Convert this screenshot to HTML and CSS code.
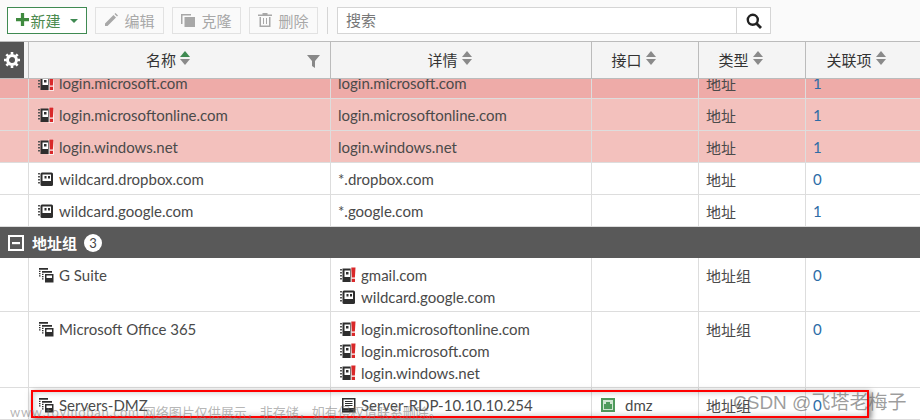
FILE: index.html
```html
<!DOCTYPE html>
<html lang="en">
<head>
    <meta charset="UTF-8">
    <title>地址</title>
    <link rel="stylesheet" href="styles.css">
</head>
<body>
    <svg class="defs" width="0" height="0">
        <symbol id="addr" viewBox="0 0 16 16">
            <rect x="2.500" y="1.500" width="12.500" height="13.500" rx="1.500" fill="#2e2e2e"/>
            <path d="M4.500 3.500h8.500v6.500H4.500z" fill="#fff"/>
            <path d="M6.500 5h2v2.500h-2zM10 5h2v2.500h-2z" fill="#2e2e2e"/>
            <path d="M0 2h2v1.500H0zM0 5h2v1.500H0zM0 8h2v1.500H0zM0 11h2v1.500H0z" fill="#555"/>
        </symbol>
        <symbol id="addr-warn" viewBox="0 0 16 16">
            <path d="M2.500 1.500h9v13.500h-9z" fill="#2e2e2e"/>
            <path d="M4.500 3.500h5.500v6.500H4.500z" fill="#fff"/>
            <path d="M6 5h2.500v2.500H6z" fill="#2e2e2e"/>
            <path d="M0 2h2v1.500H0zM0 5h2v1.500H0zM0 8h2v1.500H0zM0 11h2v1.500H0z" fill="#555"/>
            <path d="M10.500 0H16v16h-5.500z" fill="#fff" fill-opacity=".7"/>
            <path d="M11.300 .5h4.200l-.6 10h-3zM11.800 11.800h3.200v3.200h-3.200z" fill="#d9282a"/>
        </symbol>
        <symbol id="group" viewBox="0 0 16 16">
            <path d="M1 1h9v1.800H1zM1 3.800h1.500v1.200H1zM1 6h1.500v1.200H1zM1 8.200h1.500v1.200H1z" fill="#2e2e2e"/>
            <path d="M4 4h10v1.800H4zM4 6.800h1.500v1.200H4zM4 9h1.500v1.200H4zM4 11.200h1.500v1.200H4z" fill="#2e2e2e"/>
            <path d="M7 7h8.500v8.500H7z" fill="#2e2e2e"/>
            <path d="M8.500 8.500h5.500v2.500H8.500z" fill="#fff"/>
        </symbol>
        <symbol id="server" viewBox="0 0 16 16">
            <path d="M2 1h13.500v14.500H2z" fill="#2e2e2e"/>
            <path d="M3.500 2.500h10.500v8.500H3.500z" fill="#fff"/>
            <path d="M5 4h7.500v1H5zM5 6h7.500v1H5zM5 8h7.500v1H5z" fill="#2e2e2e"/>
        </symbol>
        <symbol id="sort" viewBox="0 0 10 14">
            <path d="M5 0l5 6H0z"/>
            <path d="M0 8h10l-5 6z" fill="#8a8a8a"/>
        </symbol>
    </svg>

    <div class="toolbar">
        <button class="btn btn-new">
            <svg class="plus" viewBox="0 0 12 12"><path d="M4.500 0h3v4.500H12v3H7.500V12h-3V7.500H0v-3h4.500z"/></svg>
            <span>新建</span>
            <span class="caret"></span>
        </button>
        <button class="btn">
            <svg class="ico" viewBox="0 0 14 14"><path d="M1 10.500L9.500 2l2.500 2.500L3.500 13H1zM10.500 1l1-1L14 2.500l-1 1z"/></svg>
            <span>编辑</span>
        </button>
        <button class="btn">
            <svg class="ico" viewBox="0 0 14 14"><path d="M0 1h10v1.500H1.500V11H0zM3.500 4H14v10H3.500z"/></svg>
            <span>克隆</span>
        </button>
        <button class="btn">
            <svg class="ico" viewBox="0 0 14 14"><path d="M4.500 0h5v1.500H14V3H0V1.500h4.500zM1.500 4H3v8.500h8V4h1.500v10h-11zM5 5h1v6H5zM8 5h1v6H8z"/></svg>
            <span>删除</span>
        </button>
        <div class="sep"></div>
        <div class="search">
            <div class="search-text">搜索</div>
            <div class="search-btn">
                <svg viewBox="0 0 16 16" width="16" height="16"><circle cx="6.800" cy="6.800" r="5" fill="none" stroke="#222" stroke-width="2.400"/><path d="M10.500 10.500L15 15" stroke="#222" stroke-width="2.800"/></svg>
            </div>
        </div>
    </div>

    <div class="thead row">
        <div class="cog">
            <svg viewBox="0 0 16 16" width="16" height="16"><circle cx="8" cy="8" r="4.500" fill="none" stroke="#fff" stroke-width="3"/><path d="M8 0v16M0 8h16M2.300 2.300l11.400 11.400M13.700 2.300L2.300 13.700" stroke="#fff" stroke-width="2.600" stroke-dasharray="2.600 10.800 2.600"/></svg>
        </div>
        <div class="th">名称<svg class="sort sort-on"><use href="#sort"/></svg>
            <svg class="filter" viewBox="0 0 13 13"><path d="M0 0h13L8 6v7L5 11V6z"/></svg>
        </div>
        <div class="th">详情<svg class="sort"><use href="#sort"/></svg></div>
        <div class="th">接口<svg class="sort"><use href="#sort"/></svg></div>
        <div class="th">类型<svg class="sort"><use href="#sort"/></svg></div>
        <div class="th th-last">关联项<svg class="sort"><use href="#sort"/></svg></div>
    </div>

    <div class="tbody">
        <div class="row tr first hot">
            <div></div>
            <div class="td"><div class="item"><svg class="i"><use href="#addr-warn"/></svg>login.microsoft.com</div></div>
            <div class="td"><div class="item">login.microsoft.com</div></div>
            <div class="td"></div>
            <div class="td cn">地址</div>
            <div class="td num">1</div>
        </div>
        <div class="row tr warm">
            <div></div>
            <div class="td"><div class="item"><svg class="i"><use href="#addr-warn"/></svg>login.microsoftonline.com</div></div>
            <div class="td"><div class="item">login.microsoftonline.com</div></div>
            <div class="td"></div>
            <div class="td cn">地址</div>
            <div class="td num">1</div>
        </div>
        <div class="row tr warm">
            <div></div>
            <div class="td"><div class="item"><svg class="i"><use href="#addr-warn"/></svg>login.windows.net</div></div>
            <div class="td"><div class="item">login.windows.net</div></div>
            <div class="td"></div>
            <div class="td cn">地址</div>
            <div class="td num">1</div>
        </div>
        <div class="row tr">
            <div></div>
            <div class="td"><div class="item"><svg class="i"><use href="#addr"/></svg>wildcard.dropbox.com</div></div>
            <div class="td"><div class="item">*.dropbox.com</div></div>
            <div class="td"></div>
            <div class="td cn">地址</div>
            <div class="td num">0</div>
        </div>
        <div class="row tr">
            <div></div>
            <div class="td"><div class="item"><svg class="i"><use href="#addr"/></svg>wildcard.google.com</div></div>
            <div class="td"><div class="item">*.google.com</div></div>
            <div class="td"></div>
            <div class="td cn">地址</div>
            <div class="td num">1</div>
        </div>

        <div class="group-bar">
            <svg class="minus" viewBox="0 0 16 16"><path d="M0 0h16v16H0z" fill="#fff"/><path d="M2 2h12v12H2z" fill="#595959"/><path d="M4 7h8v2.200H4z" fill="#fff"/></svg>
            <span>地址组</span>
            <span class="badge">3</span>
        </div>

        <div class="row tr tall">
            <div></div>
            <div class="td"><div class="item"><svg class="i"><use href="#group"/></svg>G Suite</div></div>
            <div class="td members">
                <div class="item"><svg class="i"><use href="#addr-warn"/></svg>gmail.com</div>
                <div class="item"><svg class="i"><use href="#addr"/></svg>wildcard.google.com</div>
            </div>
            <div class="td"></div>
            <div class="td cn">地址组</div>
            <div class="td num">0</div>
        </div>
        <div class="row tr tall">
            <div></div>
            <div class="td"><div class="item"><svg class="i"><use href="#group"/></svg>Microsoft Office 365</div></div>
            <div class="td members">
                <div class="item"><svg class="i"><use href="#addr-warn"/></svg>login.microsoftonline.com</div>
                <div class="item"><svg class="i"><use href="#addr-warn"/></svg>login.microsoft.com</div>
                <div class="item"><svg class="i"><use href="#addr-warn"/></svg>login.windows.net</div>
            </div>
            <div class="td"></div>
            <div class="td cn">地址组</div>
            <div class="td num">0</div>
        </div>
        <div class="row tr tr-low">
            <div></div>
            <div class="td"><div class="item"><svg class="i"><use href="#group"/></svg>Servers-DMZ</div></div>
            <div class="td members"><div class="item"><svg class="i"><use href="#server"/></svg>Server-RDP-10.10.10.254</div></div>
            <div class="td">
                <div class="item">
                    <svg class="port" viewBox="0 0 14 14"><path d="M0 0h14v14H0z" fill="#4f9a5c"/><path d="M2 2h10v10H2z" fill="#cfe6d2"/><path d="M3 6h8v5H3zM5 4h4v2H5z" fill="#4f9a5c"/></svg>dmz
                </div>
            </div>
            <div class="td cn">地址组</div>
            <div class="td num">0</div>
        </div>
    </div>

    <div class="highlight"></div>
    <div class="mark-left"><span class="mark-url">www.toymoban.com</span> 网络图片仅供展示，非存储，如有侵权请联系删除。</div>
    <div class="mark-right">CSDN @飞塔老梅子</div>
</body>
</html>
```

FILE: styles.css
```css
html, body {
    margin: 0;
    height: 420px;
    overflow: hidden;
}
body {
    position: relative;
    font-family: Lato, "Noto Sans CJK SC", sans-serif;
    font-size: 15px;
    color: #4a4a4a;
    background-color: #fff;
}
.defs {
    position: absolute;
}
.toolbar {
    height: 41px;
    box-sizing: border-box;
    padding: 7px 0 0 7px;
    display: flex;
    align-items: flex-start;
    gap: 8px;
    background-color: #fafafa;
}
.btn {
    height: 27px;
    width: 69px;
    padding: 0;
    display: flex;
    align-items: center;
    justify-content: center;
    gap: 6px;
    border: 1px solid #e2e2e2;
    background: #fafafa;
    color: #a8a8a8;
    font-family: inherit;
    font-size: 15px;
}
.btn-new {
    width: 80px;
    gap: 0;
    border-color: #3f8a52;
    background: #fff;
    color: #4c8a4f;
}
.plus {
    width: 13px;
    height: 13px;
    margin-right: 1px;
    margin-top: -2px;
    fill: #3f8a3f;
}
.caret {
    margin-left: 9px;
    border-left: 4px solid transparent;
    border-right: 4px solid transparent;
    border-top: 4px solid #3f8a52;
}
.ico {
    width: 14px;
    height: 14px;
    fill: #a8a8a8;
    margin-top: -2px;
}
.sep {
    width: 1px;
    height: 27px;
    margin-left: 1px;
    background-color: #d5d5d5;
}
.search {
    width: 434px;
    height: 27px;
    margin-left: 1px;
    box-sizing: border-box;
    display: flex;
    border: 1px solid #d5d5d5;
    background: #fff;
}
.search-text {
    flex: 1;
    padding-left: 8px;
    line-height: 25px;
    color: #777;
}
.search-btn {
    width: 33px;
    border-left: 1px solid #d5d5d5;
    display: flex;
    align-items: center;
    justify-content: center;
}
.row {
    display: grid;
    grid-template-columns: 28px 302px 261px 107px 107px 1fr;
}
.thead {
    height: 38px;
    box-sizing: border-box;
    border-top: 1px solid #bbb;
    border-bottom: 1px solid #bbb;
    background-color: #f4f4f4;
    color: #333;
    position: relative;
    z-index: 1;
}
.cog {
    width: 24px;
    background-color: #555;
    display: flex;
    align-items: center;
    justify-content: center;
}
.th {
    position: relative;
    display: flex;
    align-items: center;
    justify-content: center;
    gap: 4px;
    border-left: 1px solid #bbb;
    padding-bottom: 2px;
    padding-right: 23px;
}
.th-last {
    padding-right: 14px;
}
.sort {
    width: 10px;
    height: 14px;
    fill: #8a8a8a;
    margin-top: -3px;
}
.sort-on {
    fill: #3f8a52;
}
.filter {
    position: absolute;
    right: 10px;
    top: 13px;
    width: 13px;
    height: 13px;
    fill: #888;
}
.tbody {
    height: 341px;
    overflow: hidden;
}
.tr {
    min-height: 32px;
    box-sizing: border-box;
    border-bottom: 1px solid #ddd;
}
.first {
    margin-top: -12px;
}
.hot {
    background-color: #eeaba8;
}
.warm {
    background-color: #f3c1bd;
}
.td {
    border-left: 1px solid #ddd;
    padding: 5px 7px 0 9px;
    box-sizing: border-box;
}
.td:nth-child(n+3) {
    padding-left: 7px;
}
.tall .td {
    padding-top: 6px;
    padding-bottom: 3px;
}
.tr-low .td {
    padding-top: 6px;
}
.members .item {
    margin-left: 2px;
}
.item {
    height: 22px;
    line-height: 22px;
    display: flex;
    align-items: center;
    white-space: nowrap;
}
.i {
    width: 16px;
    height: 16px;
    margin-right: 5px;
    flex: none;
}
.port {
    width: 14px;
    height: 14px;
    margin: 0 10px 0 2px;
}
.cn {
    line-height: 24px;
}
.num {
    color: #2d6ca6;
    line-height: 22px;
}
.group-bar {
    height: 31px;
    display: flex;
    align-items: center;
    background-color: #595959;
    color: #fff;
    font-weight: bold;
    font-size: 15px;
    padding-left: 8px;
}
.minus {
    width: 16px;
    height: 16px;
    margin-right: 8px;
}
.badge {
    width: 18px;
    height: 18px;
    margin-left: 7px;
    border-radius: 50%;
    background-color: #fff;
    color: #444;
    font-weight: normal;
    font-size: 13px;
    line-height: 18px;
    text-align: center;
}
.highlight {
    position: absolute;
    left: 31px;
    top: 390px;
    width: 838px;
    height: 28px;
    box-sizing: border-box;
    border: 2px solid #f00;
    box-shadow: 2px 2px 6px rgba(0, 0, 0, 0.55), inset 0 0 6px rgba(0, 0, 0, 0.25);
}
.mark-left {
    position: absolute;
    left: 10px;
    top: 402px;
    font-size: 13px;
    white-space: nowrap;
    color: rgba(120, 120, 120, 0.55);
}
.mark-url {
    letter-spacing: 0.7px;
}
.mark-right {
    position: absolute;
    left: 733px;
    top: 387px;
    font-family: "Liberation Sans", "Noto Sans CJK SC", sans-serif;
    font-size: 19px;
    white-space: nowrap;
    color: rgba(90, 90, 90, 0.6);
}
```
